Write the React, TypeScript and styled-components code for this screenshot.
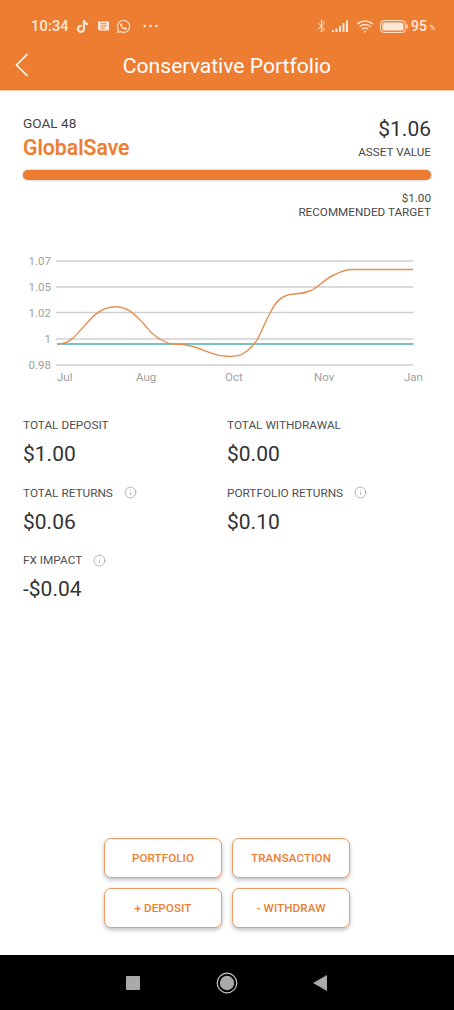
import React from "react";
import styled, { createGlobalStyle } from "styled-components";
import { FaTiktok, FaWhatsapp } from "react-icons/fa";
import { Info } from "lucide-react";

const Global = createGlobalStyle`
  html, body { margin: 0; padding: 0; background: #fff; }
  * { box-sizing: border-box; }
  body { font-family: Roboto, "Liberation Sans", sans-serif; }
`;

const Page = styled.div`
  width: 454px;
  height: 1010px;
  display: flex;
  flex-direction: column;
  overflow: hidden;
  background: #fff;
  color: #333;
`;

const Header = styled.header`
  height: 91px;
  background: #ed7d31;
  color: #fff;
  border-bottom: 1px solid #f7c9a8;
  flex: none;
`;

const StatusBar = styled.div`
  height: 48px;
  padding: 4px 19px 0 31px;
  display: flex;
  align-items: center;
  justify-content: space-between;
  color: #fde9da;
`;

const StatusGroup = styled.div`
  display: flex;
  align-items: center;
`;

const Time = styled.span`
  font-size: 14.5px;
  font-weight: 500;
  letter-spacing: 0.2px;
  margin-right: 7px;
`;

const Battery = styled.span`
  font-size: 14px;
  font-weight: 500;
  margin-left: 3px;
`;

const Percent = styled.span`
  font-size: 7px;
  font-weight: 500;
  margin-left: 3px;
  margin-top: 4px;
`;

const Slot = styled.span<{ $gap?: number }>`
  display: inline-flex;
  margin-right: ${(p) => p.$gap ?? 0}px;
`;

const NavBar = styled.div`
  height: 34px;
  display: flex;
  align-items: center;
  justify-content: center;
  position: relative;
`;

const Back = styled.svg`
  position: absolute;
  left: 15px;
  top: 5px;
`;

const Title = styled.h1`
  margin: 0;
  font-size: 21.1px;
  font-weight: 400;
`;

const Content = styled.main`
  flex: 1;
  display: flex;
  flex-direction: column;
  padding: 0 23px;
`;

const Summary = styled.section`
  display: flex;
  justify-content: space-between;
  padding-top: 24px;
`;

const SummaryCol = styled.div<{ $right?: boolean }>`
  display: flex;
  flex-direction: column;
  align-items: ${(p) => (p.$right ? "flex-end" : "flex-start")};
`;

const GoalLabel = styled.div`
  font-size: 13.6px;
  line-height: 17px;
  color: #444;
`;

const GoalName = styled.div`
  font-size: 21.2px;
  line-height: 28px;
  margin-top: 2px;
  font-weight: 500;
  color: #ed7d31;
  -webkit-text-stroke: 0.2px #ed7d31;
`;

const AssetValue = styled.div`
  font-size: 21px;
  line-height: 26px;
  margin-top: 1px;
  color: #333;
`;

const AssetCaption = styled.div`
  font-size: 11.7px;
  line-height: 14px;
  margin-top: 3px;
  color: #4a4a4a;
`;

const Small = styled.div`
  font-size: 11.7px;
  line-height: 13.5px;
  color: #4a4a4a;
`;

const Track = styled.div`
  height: 10px;
  margin-top: 8px;
  border-radius: 5px;
  background: #ed7d31;
  box-shadow: 0 0 2px rgba(0, 0, 0, 0.45);
`;

const Target = styled.div`
  margin-top: 12px;
  text-align: right;
`;

const ChartWrap = styled.svg`
  display: block;
  margin: 21px -23px 0;
  flex: none;
`;

const Axis = styled.text`
  font-family: Roboto, "Liberation Sans", sans-serif;
  font-size: 11.5px;
  fill: #a0a0a0;
`;

const Stats = styled.section`
  display: grid;
  grid-template-columns: 204px 1fr;
  row-gap: 17.5px;
  margin-top: 25px;
`;

const Stat = styled.div`
  display: flex;
  flex-direction: column;
`;

const StatLabel = styled.div`
  display: flex;
  align-items: center;
  font-size: 11.8px;
  line-height: 16px;
  color: #4f4f4f;
`;

const StatValue = styled.div`
  font-size: 21px;
  line-height: 26px;
  margin-top: 8px;
  color: #333;
`;

const InfoIcon = styled(Info)`
  margin-left: 11px;
  color: #8e8e8e;
`;

const Actions = styled.div`
  margin-top: auto;
  margin-bottom: 27px;
  align-self: center;
  display: grid;
  grid-template-columns: 118px 118px;
  grid-auto-rows: 40px;
  gap: 10px;
`;

const ActionButton = styled.button`
  border: 1.5px solid #ee9a62;
  border-radius: 7px;
  background: #fff;
  color: #ed7d31;
  font-family: Roboto, "Liberation Sans", sans-serif;
  font-size: 11.6px;
  font-weight: 500;
  letter-spacing: 0.1px;
  padding: 0;
  box-shadow: 0 2px 4px rgba(0, 0, 0, 0.25);
`;

const SystemNav = styled.nav`
  height: 55px;
  flex: none;
  background: #000;
  display: flex;
  align-items: center;
  padding: 0 127px 0 126px;
  justify-content: space-between;
`;

const curve =
  "M57 344 C64 344 69 342 73 338 C86 326 96 306.7 115 306.7 C129 306.7 136 316 143 323 C149 330 153 336 160 339 C165 342 169 344 173 344 C181 344 187 345 193 346.5 C205 350 214 356 227 356.3 C233 356.5 240 357 247 351 C252 347 254 345 257 340 C262 331 265 322 270 313 C274 305 278 299 284 296.5 C288 294.5 291 294 294 294 C299 294 305 293 310 291 C318 288 324 279 334 275 C340 272 344 269.5 352 269.5 L413 269.5";

const grid = [261, 287, 312.5, 339, 365];
const yLabels = ["1.07", "1.05", "1.02", "1", "0.98"];
const xLabels: [string, number][] = [["Jul", 57], ["Aug", 136], ["Oct", 225], ["Nov", 314], ["Jan", 404]];

const stats = [
  { label: "TOTAL DEPOSIT", value: "$1.00" },
  { label: "TOTAL WITHDRAWAL", value: "$0.00" },
  { label: "TOTAL RETURNS", value: "$0.06", info: true },
  { label: "PORTFOLIO RETURNS", value: "$0.10", info: true },
  { label: "FX IMPACT", value: "-$0.04", info: true },
];

export default function App() {
  return (
    <Page>
      <Global />
      <Header>
        <StatusBar>
          <StatusGroup>
            <Time>10:34</Time>
            <Slot $gap={8}><FaTiktok size={13} /></Slot>
            <Slot $gap={6}>
              <svg width="13" height="12" viewBox="0 0 13 12">
                <path d="M1 1.5h11v9H3l-2-1z" fill="currentColor" />
                <path d="M3.5 3.8h6M3.5 6h6M3.5 8.2h4" stroke="#ed7d31" strokeWidth="1.1" />
              </svg>
            </Slot>
            <Slot $gap={12}><FaWhatsapp size={15} /></Slot>
            <svg width="15" height="4" viewBox="0 0 15 4">
              <circle cx="1.7" cy="2" r="1.2" fill="currentColor" />
              <circle cx="7.5" cy="2" r="1.2" fill="currentColor" />
              <circle cx="13.3" cy="2" r="1.2" fill="currentColor" />
            </svg>
          </StatusGroup>
          <StatusGroup>
            <Slot $gap={6}>
              <svg width="9" height="14" viewBox="0 0 9 14" fill="none" stroke="currentColor" strokeWidth="1">
                <path d="M1 3.8l6.4 6.2-3 3V1l3 3L1 10.2" />
              </svg>
            </Slot>
            <Slot $gap={7}>
              <svg width="17" height="12" viewBox="0 0 17 12" fill="currentColor">
                <rect x="0" y="10" width="2" height="2" />
                <rect x="3.5" y="8.5" width="2" height="3.5" />
                <rect x="7" y="6" width="2" height="6" />
                <rect x="10.5" y="3" width="2" height="9" />
                <rect x="14" y="0.5" width="2" height="11.5" />
              </svg>
            </Slot>
            <Slot $gap={6}>
              <svg width="18" height="13" viewBox="0 0 18 13" fill="none" stroke="currentColor" strokeWidth="1.3">
                <path d="M1 4.2C5.5 0 12.5 0 17 4.2M3.5 6.8C6.7 3.8 11.3 3.8 14.5 6.8M6 9.2C7.8 7.6 10.2 7.6 12 9.2" />
                <circle cx="9" cy="11.4" r="1" fill="currentColor" stroke="none" />
              </svg>
            </Slot>
            <svg width="28" height="13" viewBox="0 0 28 13">
              <rect x="0.6" y="0.6" width="24.8" height="11.8" rx="3" fill="none" stroke="currentColor" strokeWidth="1" />
              <rect x="2.4" y="2.4" width="21" height="8.2" rx="1.5" fill="currentColor" />
              <rect x="26.4" y="4.5" width="1.4" height="4" rx="0.7" fill="currentColor" />
            </svg>
            <Battery>95</Battery>
            <Percent>%</Percent>
          </StatusGroup>
        </StatusBar>
        <NavBar>
          <Back width="14" height="24" viewBox="0 0 14 24" fill="none" stroke="#fff" strokeWidth="1.6">
            <path d="M12.5 1L1.5 12l11 11" />
          </Back>
          <Title>Conservative Portfolio</Title>
        </NavBar>
      </Header>
      <Content>
        <Summary>
          <SummaryCol>
            <GoalLabel>GOAL 48</GoalLabel>
            <GoalName>GlobalSave</GoalName>
          </SummaryCol>
          <SummaryCol $right>
            <AssetValue>$1.06</AssetValue>
            <AssetCaption>ASSET VALUE</AssetCaption>
          </SummaryCol>
        </Summary>
        <Track />
        <Target>
          <Small>$1.00</Small>
          <Small>RECOMMENDED TARGET</Small>
        </Target>
        <ChartWrap width="454" height="152" viewBox="0 240 454 152">
          {grid.map((y) => (
            <line key={y} x1="56" x2="413.5" y1={y} y2={y} stroke="#cfcfcf" strokeWidth="1.4" />
          ))}
          {yLabels.map((t, i) => (
            <Axis key={t} x="51" y={grid[i] + 4} textAnchor="end">{t}</Axis>
          ))}
          {xLabels.map(([t, x]) => (
            <Axis key={t} x={x} y="381">{t}</Axis>
          ))}
          <line x1="57" x2="413.5" y1="344" y2="344" stroke="#4bb0b0" strokeWidth="1.6" />
          <path d={curve} fill="none" stroke="#e98d50" strokeWidth="1.4" />
        </ChartWrap>
        <Stats>
          {stats.map((s) => (
            <Stat key={s.label}>
              <StatLabel>
                {s.label}
                {s.info && <InfoIcon size={13} strokeWidth={1.2} />}
              </StatLabel>
              <StatValue>{s.value}</StatValue>
            </Stat>
          ))}
        </Stats>
        <Actions>
          <ActionButton>PORTFOLIO</ActionButton>
          <ActionButton>TRANSACTION</ActionButton>
          <ActionButton>+ DEPOSIT</ActionButton>
          <ActionButton>- WITHDRAW</ActionButton>
        </Actions>
      </Content>
      <SystemNav>
        <svg width="14" height="14" viewBox="0 0 14 14"><rect width="14" height="14" rx="1" fill="#a9a9a9" /></svg>
        <svg width="22" height="22" viewBox="0 0 22 22">
          <circle cx="11" cy="11" r="9.8" fill="none" stroke="#c4c4c4" strokeWidth="1.2" />
          <circle cx="11" cy="11" r="7.2" fill="#a9a9a9" />
        </svg>
        <svg width="14" height="16" viewBox="0 0 14 16"><path d="M14 0v16L0 8z" fill="#a9a9a9" /></svg>
      </SystemNav>
    </Page>
  );
}
